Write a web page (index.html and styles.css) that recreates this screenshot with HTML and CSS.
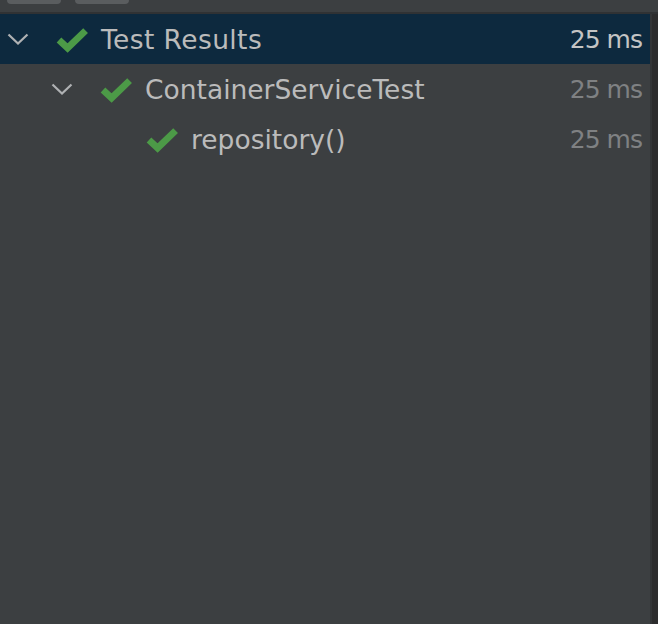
FILE: index.html
```html
<!DOCTYPE html>
<html>
<head>
<meta charset="utf-8">
<link rel="stylesheet" href="styles.css">
</head>
<body>
<div class="toolbar">
  <div class="tab"></div>
  <div class="tab"></div>
</div>
<div class="divider"></div>
<div class="main">
  <div class="tree">
    <div class="row selected level0">
      <svg class="arrow" viewBox="0 0 22 12" width="22" height="12"><path d="M1.5 1.5 L11 10.5 L20.5 1.5" fill="none" stroke="currentColor" stroke-width="2.2"/></svg>
      <svg class="check" viewBox="0 0 31 24" width="31" height="24"><path d="M2 12 L10.6 20 L28.6 2.6" fill="none" stroke="currentColor" stroke-width="6.8"/></svg>
      <span class="name">Test Results</span>
      <span class="time">25 ms</span>
    </div>
    <div class="row level1">
      <svg class="arrow" viewBox="0 0 22 12" width="22" height="12"><path d="M1.5 1.5 L11 10.5 L20.5 1.5" fill="none" stroke="currentColor" stroke-width="2.2"/></svg>
      <svg class="check" viewBox="0 0 31 24" width="31" height="24"><path d="M2 12 L10.6 20 L28.6 2.6" fill="none" stroke="currentColor" stroke-width="6.8"/></svg>
      <span class="name">ContainerServiceTest</span>
      <span class="time">25 ms</span>
    </div>
    <div class="row level2">
      <span class="arrow spacer"></span>
      <svg class="check" viewBox="0 0 31 24" width="31" height="24"><path d="M2 12 L10.6 20 L28.6 2.6" fill="none" stroke="currentColor" stroke-width="6.8"/></svg>
      <span class="name">repository()</span>
      <span class="time">25 ms</span>
    </div>
  </div>
  <div class="scrollbar"></div>
</div>
</body>
</html>
```
FILE: styles.css
```css
html, body {
  margin: 0;
  padding: 0;
  height: 100%;
}
body {
  background: #3c3f41;
  font-family: "DejaVu Sans", sans-serif;
  color: #bbbbbb;
  display: flex;
  flex-direction: column;
  overflow: hidden;
}
.toolbar {
  height: 12px;
  display: flex;
  gap: 14px;
  padding-left: 7px;
  background: #3c3f41;
}
.tab {
  width: 54px;
  height: 4px;
  background: #5a5d5f;
  border-radius: 0 0 5px 5px;
}
.divider {
  height: 2px;
  background: #303234;
}
.main {
  flex: 1;
  display: flex;
}
.tree {
  flex: 1;
  background: #3c3f41;
}
.scrollbar {
  width: 6px;
  border-left: 2px solid #333537;
  background: #2c2c2d;
}
.row {
  height: 50px;
  display: flex;
  align-items: center;
  padding-right: 8px;
  box-sizing: border-box;
}
.row.selected {
  background: #0d293e;
}
.level0 { padding-left: 7px; }
.level1 { padding-left: 51px; }
.level2 { padding-left: 97px; }
.arrow {
  width: 22px;
  height: 12px;
  color: #afb1b3;
  flex: none;
  margin-top: -1px;
}
.spacer {
  display: block;
}
.check {
  width: 31px;
  height: 24px;
  color: #4c9a47;
  margin-left: 28px;
  flex: none;
  margin-top: 2px;
  overflow: visible;
}
.name {
  margin-left: 13px;
  font-size: 26.5px;
  line-height: 50px;
  padding-top: 2px;
  white-space: nowrap;
}
.level0 .name {
  letter-spacing: 0.4px;
}
.time {
  margin-left: auto;
  font-size: 25px;
  letter-spacing: -1px;
  line-height: 50px;
  padding-top: 2px;
  color: #7f8183;
  white-space: nowrap;
}
.selected .time {
  color: #c4c4c4;
}
```
